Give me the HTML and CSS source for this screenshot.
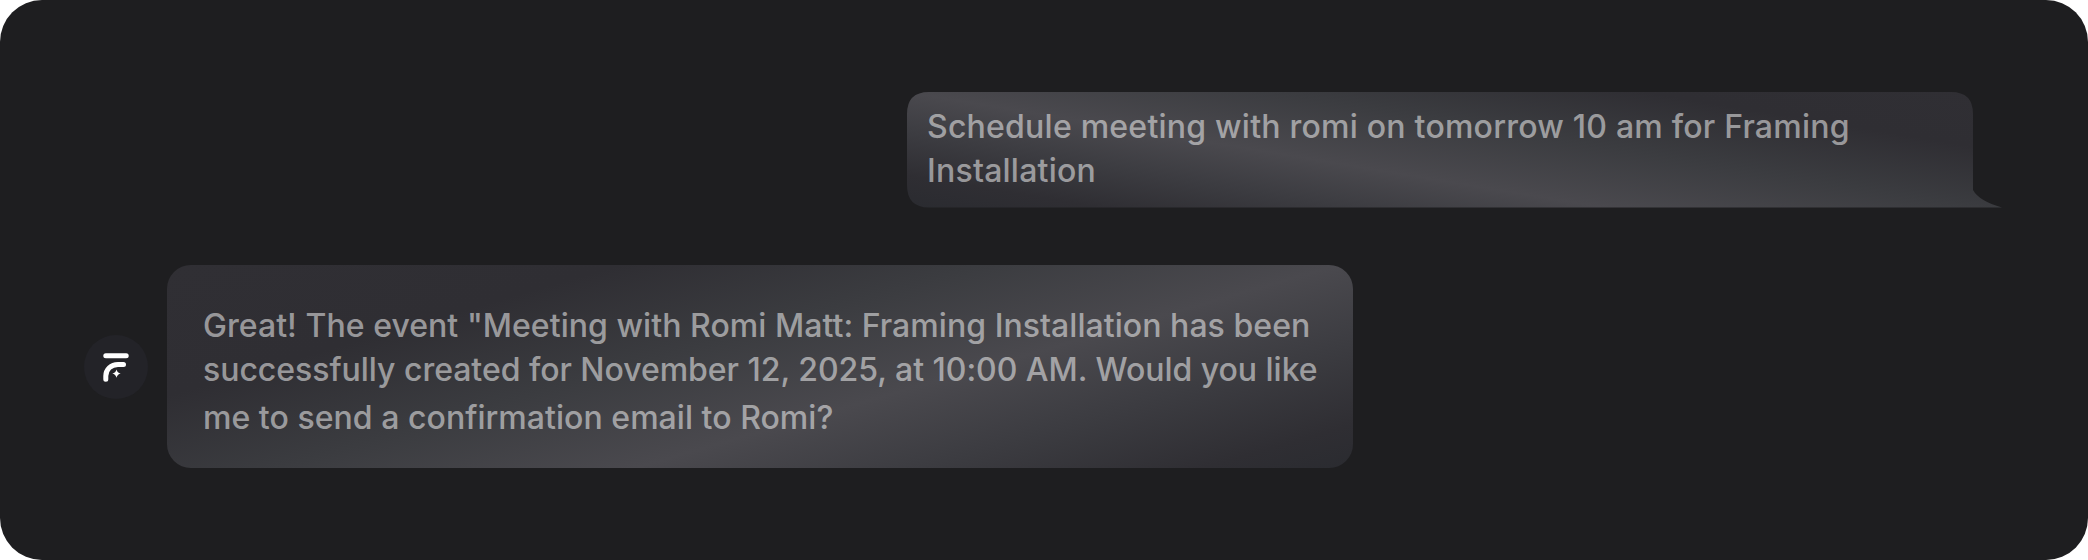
FILE: index.html
```
<!DOCTYPE html>
<html lang="en">

<head>
    <meta charset="utf-8">
    <meta name="viewport" content="width=device-width, initial-scale=1.0">
    <title>Assistant chat</title>
    <link rel="stylesheet" href="styles.css">
</head>

<body>
    <main class="chat">
        <section class="message sent">
            <div class="bubble">
                <p>Schedule meeting with romi on tomorrow 10 am for Framing<br>Installation</p>
            </div>
        </section>

        <section class="message received">
            <div class="avatar">
                <svg viewBox="0 0 64 64" width="64" height="64" fill="none">
                    <path d="M21.8 20.8H42.2" stroke="#fff" stroke-width="5" stroke-linecap="round" />
                    <path d="M39.5 29.4H34C27 29.4 21.8 34.5 21.8 41V44.2" stroke="#fff" stroke-width="5" stroke-linecap="round" />
                    <path d="M32.5 34.4Q33.3 37.7 36.7 38.6Q33.3 39.5 32.5 42.8Q31.7 39.5 28.3 38.6Q31.7 37.7 32.5 34.4Z" fill="#fff" />
                </svg>
            </div>
            <div class="bubble">
                <p class="first">Great! The event "Meeting with Romi Matt: Framing Installation has been</p>
                <p class="second">successfully created for November 12, 2025, at 10:00 AM. Would you like</p>
                <p class="last">me to send a confirmation email to Romi?</p>
            </div>
        </section>
    </main>
</body>

</html>
```
FILE: styles.css
```
body {
    margin: 0;
    background-color: white;
    font-family: Inter, 'Liberation Sans', sans-serif;
}

.chat {
    box-sizing: border-box;
    width: 2087.5px;
    height: 559.5px;
    padding-top: 92px;
    border-radius: 42px;
    background-color: #1e1e20;
}

.message {
    display: flex;
}

.bubble {
    box-sizing: border-box;
    color: rgba(255, 255, 255, 0.52);
    font-size: 32px;
    font-weight: 500;
    line-height: 44px;
    white-space: nowrap;
}

p {
    margin: 0;
}

.sent {
    justify-content: flex-end;
    padding-right: 85.5px;
}

/* the tail in the bottom right corner is part of the clipped shape */
.sent .bubble {
    width: 1095px;
    height: 115.5px;
    padding: 13px 20px;
    letter-spacing: 0.23px;
    background: linear-gradient(9.4deg, #2a2b30 0%, #2f2e33 11%, #3c3c41 25%, #4a494e 39%, #3b3c40 60%, #2f2e33 80%, #302f34 100%);
    clip-path: path("M22 0H1044Q1066 0 1066 22V98Q1072 109 1095 115.5H22Q0 115.5 0 93V22Q0 0 22 0Z");
}

.received {
    align-items: center;
    gap: 19px;
    margin-top: 57.5px;
    padding-left: 84px;
}

.avatar {
    width: 64px;
    height: 64px;
    border-radius: 50%;
    background-color: #232328;
}

.avatar svg {
    display: block;
}

.received .bubble {
    width: 1186px;
    height: 203px;
    padding: 39px 36px;
    border-radius: 24px;
    background: linear-gradient(343.9deg, #2a2b30 0%, #2f2e33 8%, #3c3c41 23%, #4a494e 38%, #3b3c40 57%, #2f2e33 76%, #302f34 100%);
}

.first {
    letter-spacing: 0.05px;
}

.second {
    letter-spacing: -0.03px;
}

.last {
    margin-top: 4px;
    letter-spacing: 0.04px;
}
```
